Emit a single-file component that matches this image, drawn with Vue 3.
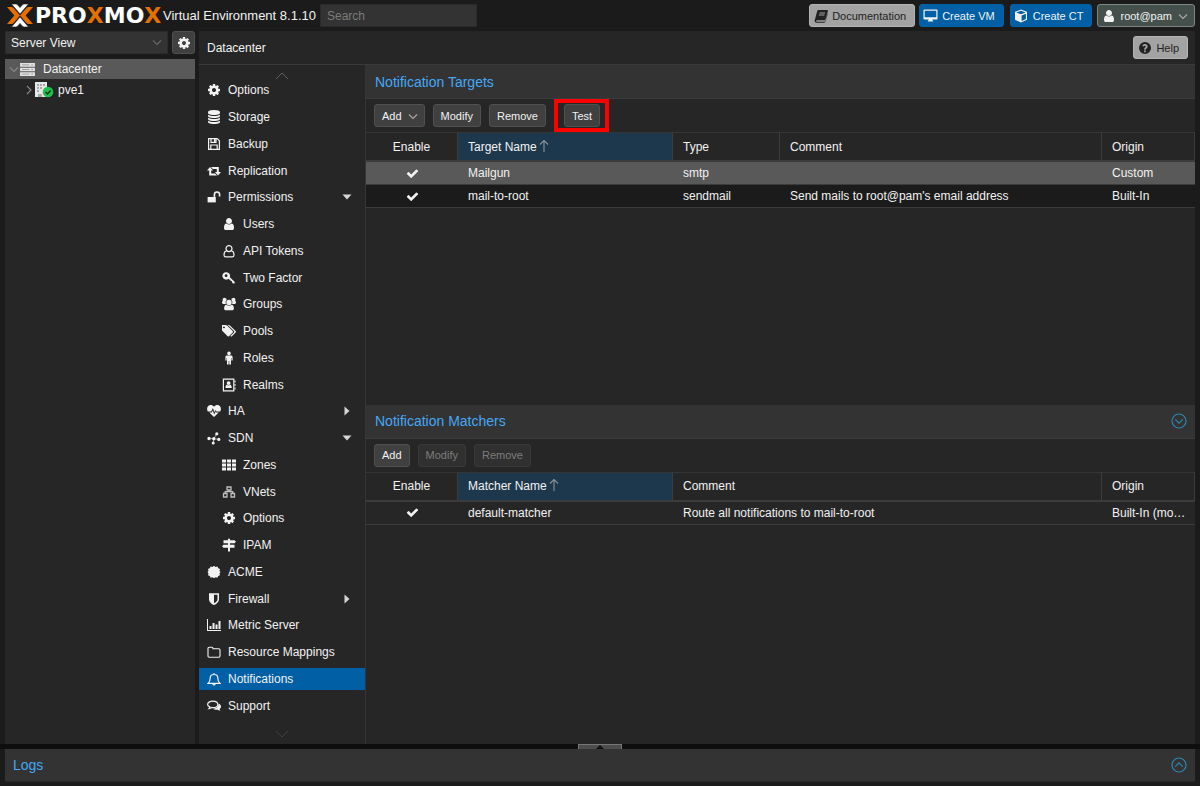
<script setup>
import { h, ref } from 'vue'

const cog = 'M1152 896q0-106-75-181t-181-75-181 75-75 181 75 181 181 75 181-75 75-181zm512-109v222q0 12-8 23t-20 13l-185 28q-19 54-39 91 35 50 107 138 10 12 10 25t-9 23q-27 37-99 108t-94 71q-12 0-26-9l-138-108q-44 23-91 38-16 136-29 186-7 28-36 28h-222q-14 0-24.5-8.5t-11.5-21.5l-28-184q-49-16-90-37l-141 107q-10 9-25 9-14 0-25-11-126-114-165-168-7-10-7-23 0-12 8-23 15-21 51-66.5t54-70.5q-27-50-41-99l-183-27q-13-2-21-12.5t-8-23.5v-222q0-12 8-23t19-13l186-28q14-46 39-92-40-57-107-138-10-12-10-24 0-10 9-23 26-36 98.5-107.5t94.5-71.5q13 0 26 10l138 107q44-23 91-38 16-136 29-186 7-28 36-28h222q14 0 24.5 8.5t11.5 21.5l28 184q49 16 90 37l142-107q9-9 24-9 13 0 25 10 129 119 165 170 7 8 7 22 0 12-8 23-15 21-51 66.5t-54 70.5q26 50 41 98l183 28q13 2 21 12.5t8 23.5z'
const userShape = 'M1536 1399q0 109-62.5 187t-150.5 78h-854q-88 0-150.5-78t-62.5-187q0-85 8.5-160.5t31.5-152 58.5-131 94-89 134.5-34.5q131 128 313 128t313-128q76 0 134.5 34.5t94 89 58.5 131 31.5 152 8.5 160.5zm-256-887q0 159-112.5 271.5t-271.5 112.5-271.5-112.5-112.5-271.5 112.5-271.5 271.5-112.5 271.5 112.5 112.5 271.5z'
const disc = 'q237 0 443-43t325-127v170q0 69-103 128t-280 93.5-385 34.5-385-34.5-280-93.5-103-128v-170q119 84 325 127t443 43z'

// Each icon: box = viewBox edge, f = filled path, s = stroked path, w = stroke width
const icons = {
  cog: { box: 1792, f: cog },
  database: { box: 1792, f: `M896 768${disc}M896 1152${disc}M896 1536${disc}M896 0q208 0 385 34.5t280 93.5 103 128v128q0 69-103 128t-280 93.5-385 34.5-385-34.5-280-93.5-103-128v-128q0-69 103-128t280-93.5 385-34.5z` },
  user: { box: 1792, f: userShape },
  userOutline: { box: 14, s: 'M7 7.6A3 3 0 1 0 7 1.6a3 3 0 0 0 0 6zM4.4 6.6C2.6 7.2 2 9 2 11c0 1.2.7 1.9 1.8 1.9h6.4c1.1 0 1.8-.7 1.8-1.9 0-2-.6-3.8-2.4-4.4', w: 1.2 },
  floppy: { box: 14, s: 'M1.6 1.6h8.6l2.2 2.2v8.6H1.6zM4 1.6v3.8h5V1.6M3.8 12.4V8h6.4v4.4M7.6 2v3', w: 1.2 },
  retweet: { box: 14, f: 'M3 3l3 3.4H4.2v3h4L10 11.4H2.2V6.4H0zM11 11.4L8 8h1.8V5h-4L4 3h7.8v5H14z' },
  unlock: { box: 14, f: 'M.6 7h8.2v5.4H.6z', s: 'M7.4 7.2V4.6a2.6 2.6 0 0 1 5.2 0v2', w: 1.6 },
  key: { box: 14, f: 'M4.5 1.2a3.7 3.7 0 1 0 2 6.5l1 1 .9 0 .2 1.3 1.2.1.2 1.2 1 1.3 1.5-.2.3-1.5L7.9 6.2a3.8 3.8 0 0 0-3.4-5zM4.1 3.2a1.4 1.4 0 1 1 0 2.9 1.4 1.4 0 0 1 0-2.9z' },
  group: { box: 14, f: 'M7 2.8a2.7 2.7 0 1 1 0 5.4 2.7 2.7 0 0 1 0-5.4zM2.8.9a1.9 1.9 0 0 1 1.8 2.2A3.4 3.4 0 0 0 3.9 7H1.4C.4 7 0 6.4 0 5.6 0 4.6.3 4 1 4a1.9 1.9 0 0 1 1.8-3.1zM11.2.9a1.9 1.9 0 0 0-1.8 2.2 3.4 3.4 0 0 1 .7 3.9h2.5c1 0 1.4-.6 1.4-1.4 0-1-.3-1.6-1-1.6A1.9 1.9 0 0 0 11.200.9zM4.300 7.700c1.600 1.400 3.800 1.400 5.400 0 1.500.1 2.200 1.900 2.200 3.700 0 1.100-.7 1.800-1.700 1.800H3.800c-1 0-1.700-.7-1.700-1.800 0-1.800.7-3.600 2.200-3.700z' },
  tags: { box: 1850, f: 'M384 448q0-53-37.5-90.5t-90.5-37.5-90.500 37.500-37.500 90.500 37.500 90.500 90.500 37.500 90.500-37.500 37.500-90.500zm1067 576q0 53-37 90l-491 492q-39 37-91 37-53 0-90-37l-715-716q-38-37-64.500-101t-26.500-117v-416q0-52 38-90t90-38h416q53 0 117 26.500t102 64.500l715 714q37 39 37 91zm384 0q0 53-37 90l-491 492q-39 37-91 37-36 0-59-14t-53-45l470-470q37-37 37-90 0-52-37-91l-715-714q-38-38-102-64.500t-117-26.500h224q53 0 117 26.500t102 64.500l715 714q37 39 37 91z' },
  male: { box: 14, f: 'M7 .6a1.800 1.800 0 1 1 0 3.600 1.800 1.800 0 0 1 0-3.600zM5 4.600h4c1 0 1.600.6 1.600 1.600v3.200H9.400V7H9v6.400H7.300V10h-.6v3.400H5V7h-.4v2.400H3.400V6.200c0-1 .6-1.600 1.600-1.600z' },
  addressBook: { box: 14, f: 'M6.600 3.200a1.800 1.800 0 1 1 0 3.800 1.800 1.800 0 0 1 0-3.800zM5 6.800c1 .8 2.200.8 3.200 0 1 .2 1.500 1.200 1.500 3.200H3.500c0-2 .5-3 1.500-3.200zM12.500 2.500h1v2h-1zM12.500 6h1v2h-1zM12.500 9.500h1v2h-1z', s: 'M1.400 1.200h10.400v11.600H1.400z', w: 1.2 },
  heartbeat: { box: 14, f: 'M7 13L2.300 8.400h2.500l1-2 1.400 4 1.500-3 .5 1h2.500zM7 2.800C5.500.8 2.600.6 1.200 2.100-.2 3.600-.2 5.600.8 7.500h3.400L5.900 4l1.500 4.200 1.200-2.200.8 1.500h3.800c1-1.900 1-3.900-.4-5.400C11.400.6 8.500.8 7 2.800z' },
  sdn: { box: 14, f: 'M2 5.800a1.700 1.700 0 1 1 0 3.400 1.700 1.700 0 0 1 0-3.400zM6.800 6a1.700 1.700 0 1 1 0 3.400 1.700 1.700 0 0 1 0-3.400zM9.800 1.200a1.600 1.600 0 1 1 0 3.200 1.600 1.600 0 0 1 0-3.200zM11.800 6.800a1.600 1.600 0 1 1 0 3.200 1.600 1.600 0 0 1 0-3.200zM6.200 10.500a1.500 1.500 0 1 1 0 3 1.500 1.500 0 0 1 0-3z', s: 'M2 7.500L6.800 7.700 9.800 2.800M6.800 7.700l5 .7M6.800 7.700L6.200 12', w: 0.6 },
  grid: { box: 14, f: 'M0 1.500h4v3H0zM5 1.500h4v3H5zM10 1.500h4v3h-4zM0 5.500h4v3H0zM5 5.500h4v3H5zM10 5.500h4v3h-4zM0 9.500h4v3H0zM5 9.500h4v3H5zM10 9.500h4v3h-4z' },
  network: { box: 14, s: 'M5 2h4v3H5zM1.500 8.500h3.500v3.500H1.500zM9 8.500h3.500v3.500H9zM7 5v2M3.200 8.500V6.700h7.600v1.800', w: 1.3, dim: true },
  signs: { box: 14, f: 'M6 .8h2v1.400h4.500L14 3.700l-1.500 1.500H8v1.500h4.500v3H8v3.700H6V9.700H1.500L0 8.200l1.500-1.500H6V5.200H1.500v-3H6z' },
  certificate: { box: 14, f: 'M7 .8l1.500 1.300 1.900-.6.800 1.800 1.800.7-.500 1.900L13.500 7l-1 1.400.5 1.900-1.800.7-.8 1.800-1.900-.6L7 13.300l-1.500-1.100-1.900.6-.8-1.800-1.800-.7.500-1.900L.5 7l1-1.100L1 4l1.800-.7.800-1.800 1.900.6z' },
  shield: { box: 14, f: 'M2 1.200h10v6.200c0 2.600-2.500 4.500-5 5.600-2.500-1.100-5-3-5-5.600zM7 2.700v8.500c2-1 3.500-2.300 3.500-3.800V2.700z' },
  chart: { box: 14, f: 'M0 1h1v11h13v1H0zM2.500 8h2v3h-2zM5.500 5h2v6h-2zM8.500 6.500h2v4.500h-2zM11.500 3h2v8h-2z' },
  folder: { box: 14, s: 'M1 3.500c0-.8.400-1.200 1.200-1.200h2.600c.8 0 1.200.4 1.200 1.200v.3h5.800c.8 0 1.200.4 1.200 1.200v6c0 .8-.4 1.200-1.200 1.200H2.200c-.8 0-1.200-.4-1.200-1.200z', w: 1.1 },
  bell: { box: 14, s: 'M1.200 11.300C2.800 10 3.200 8.300 3.200 6c0-2 1.500-3.500 3.800-3.500S10.800 4 10.800 6c0 2.300.4 4 2 5.300zM7 2.500V1M5.800 11.800c.3 1.500 2.100 1.500 2.400 0', w: 1.2 },
  comments: { box: 14, f: 'M11.500 4.500C13 5.100 14 6.200 14 7.500c0 1-.5 1.900-1.400 2.500.1.700.5 1.200 1 1.600-1 .1-1.900-.2-2.700-.9-1.900.3-3.700-.1-4.800-1 3.400 0 5.800-2.400 5.400-5.200z', s: 'M5.700 2.200c2.900 0 5.100 1.400 5.100 3.200s-2.200 3.200-5.100 3.200l-1-.1c-.8.600-1.700 1-2.700 1.100.5-.5.800-1 .9-1.700C1.500 7.300.6 6.400.6 5.400c0-1.800 2.200-3.200 5.100-3.200z', w: 1.2 },
  book: { box: 14, f: 'M4.500 1h8.700c.7 0 .9.400.7 1l-2.500 8.500c-.2.600-.5.800-1.100.8H3c-.8 0-1.100.3-.9.800.1.400.5.600 1.100.6h7.200c.5 0 .8-.2.900-.7l2.200-7.600.2.800-2.300 7.600c-.2.700-.7 1-1.400 1H2.900C1.500 13.800.3 12.500.7 11.300L3.200 2.200C3.400 1.500 3.800 1 4.500 1zM5.600 3.400l-.3 1h5.600l.3-1zM5 5.600l-.3 1h5.600l.3-1z' },
  monitor: { box: 16, f: 'M1.500 1.500h13c.7 0 1 .3 1 1v8.800c0 .7-.3 1-1 1H10c0 1 .8 1.300 1 2H5c.2-.7 1-1 1-2H1.500c-.7 0-1-.3-1-1V2.500c0-.7.3-1 1-1zM1.800 2.800v7h12.400v-7z' },
  cube: { box: 14, f: 'M7 .5l6 2.300v7.900L7 13.600 1 10.700V2.800zM7 1.700L2.300 3.500 7 5.300l4.700-1.800zM7.600 6.400v5.700L11.900 10V4.700z' },
  help: { box: 14, f: 'M7 1a6 6 0 1 1 0 12A6 6 0 0 1 7 1zM6.100 9.500v1.700h1.700V9.500zM4.200 4.700l1.200.9c1-1.300 2.300-.9 2.300 0 0 1-1.700 1-1.600 3.100h1.700c0-1.300 1.900-1.500 1.900-3.300 0-2.500-4-3.400-5.500-.7z' },
  check: { box: 1792, f: 'M1671 566q0 40-28 68l-724 724-136 136q-28 28-68 28t-68-28l-136-136-362-362q-28-28-28-68t28-68l136-136q28-28 68-28t68 28l294 295 656-657q28-28 68-28t68 28l136 136q28 28 28 68z' },
  down: { box: 14, s: 'M3 5.500l4 4 4-4', w: 1.1 },
  right: { box: 14, s: 'M5 3l4 4-4 4', w: 1.1 },
  caretDown: { box: 14, f: 'M2.500 4.500h9L7 9.500z' },
  caretRight: { box: 14, f: 'M4.500 2.500v9l5-4.500z' },
  arrowUp: { box: 14, s: 'M7 13V1.500M3 5.500l4-4 4 4', w: 1.1 },
  circleDown: { box: 16, s: 'M8 1a7 7 0 1 1 0 14A7 7 0 0 1 8 1zM4.200 6.400L8 10.200l3.800-3.800', w: 1.2 },
  circleUp: { box: 16, s: 'M8 1a7 7 0 1 1 0 14A7 7 0 0 1 8 1zM4.200 9.600L8 5.800l3.800 3.800', w: 1.2 },
}

function Icon({ name }) {
  const i = icons[name]
  return h('svg', { viewBox: `0 0 ${i.box} ${i.box}`, 'aria-hidden': 'true', opacity: i.dim ? 0.75 : 1 }, [
    i.f && h('path', { d: i.f, fill: 'currentColor', 'fill-rule': 'evenodd' }),
    i.s && h('path', { d: i.s, fill: 'none', stroke: 'currentColor', 'stroke-width': i.w }),
  ])
}
Icon.props = ['name']

const nav = [
  ['Options', 'cog'],
  ['Storage', 'database'],
  ['Backup', 'floppy'],
  ['Replication', 'retweet'],
  ['Permissions', 'unlock', 0, 'caretDown'],
  ['Users', 'user', 1],
  ['API Tokens', 'userOutline', 1],
  ['Two Factor', 'key', 1],
  ['Groups', 'group', 1],
  ['Pools', 'tags', 1],
  ['Roles', 'male', 1],
  ['Realms', 'addressBook', 1],
  ['HA', 'heartbeat', 0, 'caretRight'],
  ['SDN', 'sdn', 0, 'caretDown'],
  ['Zones', 'grid', 1],
  ['VNets', 'network', 1],
  ['Options', 'cog', 1],
  ['IPAM', 'signs', 1],
  ['ACME', 'certificate'],
  ['Firewall', 'shield', 0, 'caretRight'],
  ['Metric Server', 'chart'],
  ['Resource Mappings', 'folder'],
  ['Notifications', 'bell'],
  ['Support', 'comments'],
].map(([label, icon, sub, caret]) => ({ label, icon, sub, caret }))

const active = ref('Notifications')
const search = ref('')
const selectedTarget = ref('Mailgun')

const targets = [
  { name: 'Mailgun', type: 'smtp', comment: '', origin: 'Custom' },
  { name: 'mail-to-root', type: 'sendmail', comment: "Send mails to root@pam's email address", origin: 'Built-In' },
]
const matchers = [
  { name: 'default-matcher', comment: 'Route all notifications to mail-to-root', origin: 'Built-In (mo…' },
]
</script>

<template>
  <div class="app">
    <header class="top">
      <div class="brand">
        <svg class="mark" viewBox="0 0 26 23" aria-hidden="true">
          <path fill="#e57000" d="M0 3h4c1.300 0 2 .4 2.800 1.300L13 11.500l-6.200 7.200C6 19.600 5.300 20 4 20H0l7.300-8.500zM26 3h-4c-1.300 0-2 .4-2.800 1.300L13 11.500l6.200 7.200c.8.900 1.500 1.300 2.800 1.300h4l-7.300-8.500z" />
          <path fill="#fff" stroke="#1b1b1b" stroke-width=".6" d="M4.500 0h4c1 0 1.700.3 2.300 1L13 3.600 15.200 1c.6-.7 1.300-1 2.300-1h4L13 10zM4.500 23h4c1 0 1.700-.3 2.300-1l2.200-2.600 2.200 2.600c.6.7 1.300 1 2.300 1h4L13 13z" />
        </svg>
        <span class="wordmark">PRO<b>X</b>MO<b>X</b></span>
      </div>
      <span class="version">Virtual Environment 8.1.10</span>
      <input v-model="search" class="search" type="text" placeholder="Search" aria-label="Search">
      <div class="actions">
        <button class="btn light"><Icon name="book" />Documentation</button>
        <button class="btn blue vm"><Icon name="monitor" />Create VM</button>
        <button class="btn blue ct"><Icon name="cube" />Create CT</button>
        <button class="btn account"><Icon name="user" />root@pam<Icon name="down" class="chev" /></button>
      </div>
    </header>

    <div class="body">
      <aside class="side">
        <div class="view">
          <div class="combo">
            <select aria-label="View"><option>Server View</option></select>
            <Icon name="down" />
          </div>
          <button class="btn gear" aria-label="Settings"><Icon name="cog" /></button>
        </div>
        <ul class="tree">
          <li class="node selected">
            <Icon name="down" class="twist" />
            <svg class="server" viewBox="0 0 16 14" aria-hidden="true">
              <path fill="#e4e4e4" d="M0 0h16v4H0zM0 5h16v4H0zM0 10h16v4H0z" />
              <path stroke="#999" d="M2 2h8M2 7h8M2 12h8M12 2h2M12 7h2M12 12h2" />
            </svg>
            <span>Datacenter</span>
          </li>
          <li class="node child">
            <Icon name="right" class="twist" />
            <svg class="host" viewBox="0 0 19 16" aria-hidden="true">
              <path fill="#e8e8e8" d="M0 0h12v15H0z" />
              <path fill="#aaa" d="M2 2h2v2H2zM5 2h2v2H5zM8 2h2v2H8zM2 5h2v2H2zM5 5h2v2H5zM2 8h2v2H2zM3 12h4v3H3z" />
              <circle cx="13" cy="10" r="5.300" fill="#21bf4b" />
              <path d="M10.500 10l2 2 3.200-3.500" fill="none" stroke="#17351f" stroke-width="1.500" />
            </svg>
            <span>pve1</span>
          </li>
        </ul>
      </aside>

      <main class="main">
        <div class="crumb">
          <h1>Datacenter</h1>
          <button class="btn light"><Icon name="help" />Help</button>
        </div>
        <div class="work">
          <nav class="nav" aria-label="Datacenter">
            <button class="scroll up" aria-label="Scroll up">
              <svg viewBox="0 0 14 8"><path d="M1 7l6-6 6 6" /></svg>
            </button>
            <ul>
              <li v-for="(item, n) in nav" :key="n">
                <a href="#" :class="{ sub: item.sub, active: active === item.label }" @click.prevent="active = item.label">
                  <Icon :name="item.icon" />
                  <span>{{ item.label }}</span>
                  <Icon v-if="item.caret" :name="item.caret" class="caret" />
                </a>
              </li>
            </ul>
            <button class="scroll down" aria-label="Scroll down">
              <svg viewBox="0 0 14 8"><path d="M1 1l6 6 6-6" /></svg>
            </button>
          </nav>

          <div class="panels">
            <section class="panel">
              <div class="title"><h2>Notification Targets</h2></div>
              <div class="toolbar">
                <button class="btn menu">Add<Icon name="down" class="chev" /></button>
                <button class="btn">Modify</button>
                <button class="btn">Remove</button>
                <span class="marked"><button class="btn">Test</button></span>
              </div>
              <table>
                <colgroup><col class="c-enable"><col class="c-name"><col class="c-type"><col><col class="c-origin"></colgroup>
                <thead>
                  <tr>
                    <th class="mid">Enable</th>
                    <th class="sorted">Target Name<Icon name="arrowUp" /></th>
                    <th>Type</th>
                    <th>Comment</th>
                    <th>Origin</th>
                  </tr>
                </thead>
                <tbody>
                  <tr v-for="(t, n) in targets" :key="t.name" :class="{ picked: selectedTarget === t.name, alt: n % 2 }" @click="selectedTarget = t.name">
                    <td class="mid"><Icon name="check" /></td>
                    <td>{{ t.name }}</td>
                    <td>{{ t.type }}</td>
                    <td>{{ t.comment }}</td>
                    <td>{{ t.origin }}</td>
                  </tr>
                </tbody>
              </table>
            </section>

            <section class="panel">
              <div class="title">
                <h2>Notification Matchers</h2>
                <button class="tool" aria-label="Collapse panel"><Icon name="circleDown" /></button>
              </div>
              <div class="toolbar">
                <button class="btn">Add</button>
                <button class="btn" disabled>Modify</button>
                <button class="btn" disabled>Remove</button>
              </div>
              <table>
                <colgroup><col class="c-enable"><col class="c-name"><col><col class="c-origin"></colgroup>
                <thead>
                  <tr>
                    <th class="mid">Enable</th>
                    <th class="sorted">Matcher Name<Icon name="arrowUp" /></th>
                    <th>Comment</th>
                    <th>Origin</th>
                  </tr>
                </thead>
                <tbody>
                  <tr v-for="m in matchers" :key="m.name">
                    <td class="mid"><Icon name="check" /></td>
                    <td>{{ m.name }}</td>
                    <td>{{ m.comment }}</td>
                    <td>{{ m.origin }}</td>
                  </tr>
                </tbody>
              </table>
            </section>
          </div>
        </div>
      </main>
    </div>

    <div class="splitter">
      <button class="grip" aria-label="Toggle log panel"><svg viewBox="0 0 8 4"><path d="M0 4l4-4 4 4z" /></svg></button>
    </div>
    <footer class="logs">
      <h2>Logs</h2>
      <button class="tool" aria-label="Expand logs"><Icon name="circleUp" /></button>
    </footer>
  </div>
</template>

<style>
body {
  margin: 0;
  background: #1b1b1b;
}
</style>

<style scoped>
* {
  box-sizing: border-box;
}
.app {
  display: flex;
  flex-direction: column;
  min-height: 100vh;
  padding-bottom: 4px;
  background: #1b1b1b;
  color: #f2f2f2;
  font: 12px/16px "Liberation Sans", Arial, sans-serif;
}
svg {
  display: block;
  flex: none;
  width: 14px;
  height: 14px;
}
button,
input,
select {
  margin: 0;
  font: inherit;
  color: inherit;
}
h1,
h2 {
  margin: 0;
  font-weight: 400;
}
h1 {
  font-size: 12px;
}
h2 {
  font-size: 14px;
  color: #45a8f5;
}
ul {
  margin: 0;
  padding: 0;
  list-style: none;
}

.btn {
  display: flex;
  align-items: center;
  justify-content: center;
  height: 23px;
  padding: 0 7px;
  border: 1px solid #505050;
  border-radius: 3px;
  background: #404040;
  color: #f2f2f2;
  font-size: 11px;
  line-height: 16px;
  white-space: nowrap;
}
.btn:disabled {
  border-color: #383838;
  background: #303030;
  color: #7d7d7d;
}
.btn .chev {
  color: #aaa;
}
.btn.light {
  gap: 4px;
  padding: 0 8px 0 4px;
  border-color: #b4b4b4;
  background: #a3a3a3;
  color: #222;
}
.btn.blue {
  gap: 4px;
  padding: 0 8px 0 3px;
  border-color: #0062a8;
  background: #005fa5;
}
.btn.vm {
  margin-right: 2px;
}
.btn.vm svg {
  width: 15px;
  height: 15px;
}
.btn.ct {
  gap: 5px;
  margin-right: 1px;
}
.btn.account {
  gap: 4px;
  padding: 0 4px;
  border-color: #7c8684;
  background: #45504d;
}

.top {
  display: flex;
  align-items: center;
  height: 31px;
  padding: 0 5px 0 7px;
}
.brand {
  display: flex;
  align-items: center;
  gap: 2px;
  width: 156px;
}
.mark {
  width: 26px;
  height: 23px;
}
.wordmark {
  color: #fff;
  font: 700 22px/24px "DejaVu Sans", sans-serif;
}
.wordmark b {
  color: #e57000;
}
.version {
  width: 157px;
  font-size: 13px;
  white-space: nowrap;
}
.search {
  width: 157px;
  height: 23px;
  padding: 0 6px;
  border: 1px solid #2b2b2b;
  background: #333;
}
.search::placeholder {
  color: #7c7c7c;
}
.actions {
  display: flex;
  gap: 4px;
  margin-left: auto;
}

.body {
  display: flex;
  flex: 1;
  gap: 4px;
  padding: 0 5px;
}
.side {
  display: flex;
  flex-direction: column;
  flex: none;
  gap: 5px;
  width: 190px;
}
.view {
  display: flex;
  gap: 4px;
}
.combo {
  position: relative;
  flex: 1;
}
.combo select {
  width: 100%;
  height: 23px;
  padding: 0 5px;
  border: 1px solid #2b2b2b;
  background: #333;
  appearance: none;
}
.combo svg {
  position: absolute;
  top: 4px;
  right: 4px;
  color: #666;
  pointer-events: none;
}
.gear {
  width: 23px;
  padding: 0;
}
.tree {
  display: flex;
  flex: 1;
  flex-direction: column;
  gap: 1px;
  background: #262626;
}
.node {
  display: flex;
  align-items: center;
  height: 20px;
  padding-left: 2px;
}
.node.selected {
  background: #595959;
}
.node.child {
  padding-left: 17px;
}
.twist {
  color: #888;
}
.node .server {
  width: 15px;
  height: 13px;
  margin: 0 8px 0 -1px;
}
.node .host {
  width: 19px;
  height: 16px;
  margin: 0 4px 0 -1px;
}

.main {
  display: flex;
  flex: 1;
  flex-direction: column;
  min-width: 0;
  background: #262626;
}
.crumb {
  display: flex;
  align-items: center;
  justify-content: space-between;
  height: 34px;
  padding: 0 7px 0 8px;
  border-bottom: 1px solid #3a3a3a;
}
.work {
  display: flex;
  flex: 1;
}
.nav {
  display: flex;
  flex: none;
  flex-direction: column;
  width: 167px;
  border-right: 1px solid #353535;
}
.nav ul {
  display: flex;
  flex: 1;
  flex-direction: column;
}
.nav li {
  display: flex;
  flex: 1;
  align-items: center;
}
.nav a {
  display: flex;
  flex: 1;
  align-items: center;
  gap: 7px;
  height: 22px;
  padding: 0 11px 0 8px;
  color: inherit;
  text-decoration: none;
}
.nav a.sub {
  padding-left: 23px;
}
.nav a.active {
  background: #005fa5;
}
.nav .caret {
  margin-left: auto;
  color: #d5d5d5;
}
.scroll {
  display: flex;
  justify-content: center;
  padding: 7px 0 0;
  border: 0;
  background: none;
  color: #606060;
}
.scroll.up {
  height: 12px;
}
.scroll.down {
  height: 25px;
  padding-top: 11px;
  color: #414141;
}
.scroll svg {
  width: 14px;
  height: 8px;
  fill: none;
  stroke: currentColor;
}

.panels {
  display: flex;
  flex: 1;
  flex-direction: column;
  min-width: 0;
}
.panel {
  flex: 1;
}
.title {
  display: flex;
  align-items: center;
  justify-content: space-between;
  height: 34px;
  padding: 0 8px 0 9px;
  border-bottom: 1px solid #3c3c3c;
  background: #333;
}
.tool {
  padding: 0;
  border: 0;
  background: none;
  color: #2b86b0;
}
.tool svg {
  width: 16px;
  height: 16px;
}
.toolbar {
  display: flex;
  align-items: center;
  gap: 8px;
  height: 33px;
  padding: 0 8px;
}
.btn.menu {
  gap: 4px;
  padding-right: 4px;
}
.marked {
  position: relative;
  margin-left: 10px;
}
.marked::before {
  position: absolute;
  inset: -5px -9px -5px -10px;
  border: 4px solid #f00;
  content: "";
  pointer-events: none;
}

table {
  width: 100%;
  border-collapse: separate;
  border-spacing: 0;
  table-layout: fixed;
}
.c-enable {
  width: 92px;
}
.c-name {
  width: 215px;
}
.c-type {
  width: 107px;
}
.c-origin {
  width: 93px;
}
th,
td {
  overflow: hidden;
  padding: 0 5px 0 10px;
  font-weight: 400;
  text-align: left;
  text-overflow: ellipsis;
  white-space: nowrap;
}
th {
  height: 30px;
  border-top: 1px solid #353535;
  border-right: 1px solid #3c3c3c;
  border-bottom: 2px solid #3c3c3c;
}
th.sorted {
  background: #1d384d;
}
th svg {
  display: inline-block;
  vertical-align: -2px;
  color: #8a9299;
}
td {
  height: 23px;
  border-bottom: 1px solid #3c3c3c;
}
.mid {
  padding: 0;
  text-align: center;
}
td svg {
  width: 13px;
  height: 13px;
  margin: 0 auto;
}
.alt td {
  background: #1b1b1b;
}
.picked td {
  background: #595959;
}

.splitter {
  display: flex;
  justify-content: center;
  height: 5px;
  background: #0e0e0e;
}
.grip {
  display: flex;
  justify-content: center;
  width: 44px;
  height: 5px;
  padding: 0;
  border: 1px solid #777;
  border-bottom: 0;
  background: #4d4d4d;
}
.grip svg {
  width: 8px;
  height: 4px;
  fill: #111;
}
.logs {
  display: flex;
  align-items: center;
  justify-content: space-between;
  height: 33px;
  margin: 0 5px;
  padding: 0 8px;
  border-bottom: 1px solid #292929;
  background: #333;
}
</style>
